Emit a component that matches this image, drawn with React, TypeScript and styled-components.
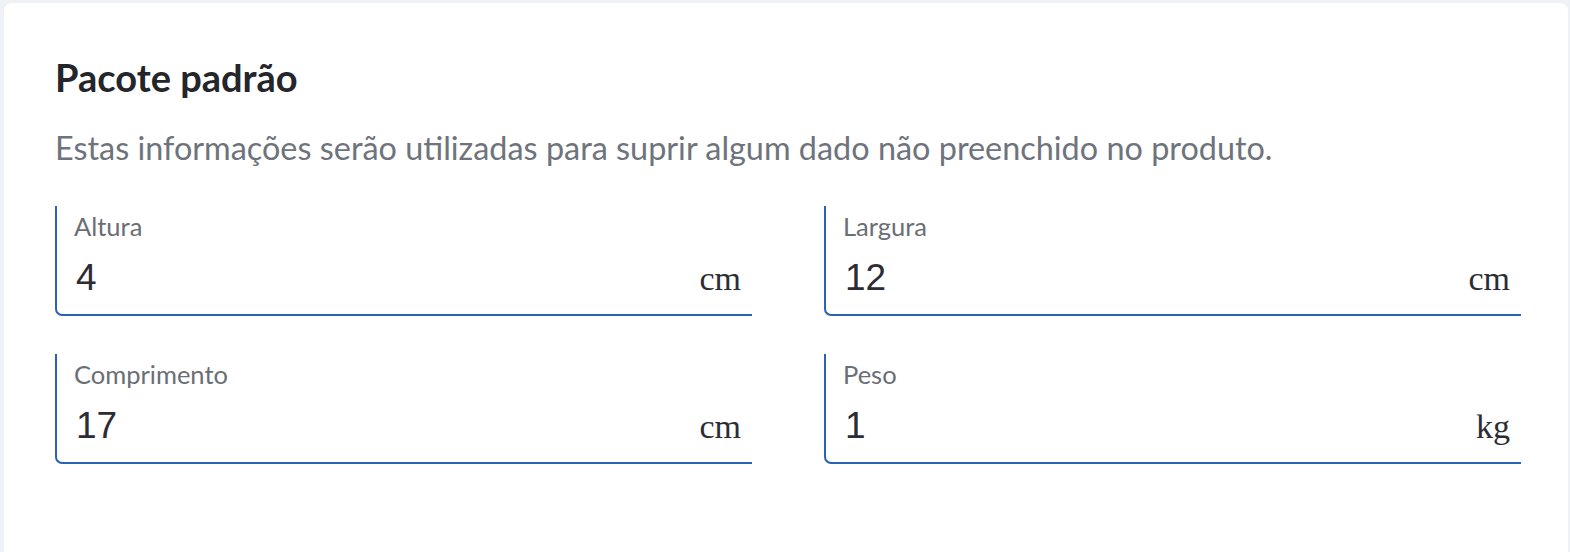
import React from "react";
import styled, { createGlobalStyle } from "styled-components";

const Global = createGlobalStyle`
  html, body { margin: 0; padding: 0; background: #eef1f5; }
  body { font-family: Lato, "Noto Sans", sans-serif; }
`;

const Page = styled.div`
  padding: 3px 0 0 4px;
  height: 549px;
  overflow: hidden;
`;

const Card = styled.section`
  background: #ffffff;
  border-radius: 8px;
  width: 1564px;
  height: 600px;
  box-sizing: border-box;
  padding: 52px 46px 0 51px;
`;

const Title = styled.h2`
  margin: 0;
  font-family: Lato, sans-serif;
  font-weight: 700;
  font-size: 38px;
  line-height: 44px;
  color: #24262b;
`;

const Description = styled.p`
  margin: 29px 0 0;
  font-family: Lato, sans-serif;
  font-weight: 400;
  font-size: 32.4px;
  line-height: 40px;
  color: #6e737c;
`;

const Grid = styled.div`
  margin-top: 38px;
  display: grid;
  grid-template-columns: 697px 697px;
  column-gap: 72px;
  row-gap: 38px;
`;

const Field = styled.label`
  display: flex;
  flex-direction: column;
  height: 110px;
  box-sizing: border-box;
  border-left: 2px solid #2a63b1;
  border-bottom: 2px solid #2a63b1;
  border-bottom-left-radius: 7px;
  padding: 5px 11px 0 17px;
`;

const Label = styled.span`
  font-family: Lato, sans-serif;
  font-size: 25.5px;
  line-height: 30px;
  color: #6a6e75;
`;

const Row = styled.div`
  display: flex;
  align-items: baseline;
  justify-content: space-between;
  margin-top: 17px;
`;

const Value = styled.span`
  font-family: "Liberation Sans", Arial, sans-serif;
  font-size: 37px;
  line-height: 40px;
  color: #2b2d33;
  padding-left: 2px;
`;

const Unit = styled.span`
  font-family: "Liberation Serif", "Times New Roman", serif;
  font-size: 34px;
  line-height: 40px;
  color: #2b2d33;
`;

const fields = [
  { label: "Altura", value: "4", unit: "cm" },
  { label: "Largura", value: "12", unit: "cm" },
  { label: "Comprimento", value: "17", unit: "cm" },
  { label: "Peso", value: "1", unit: "kg" },
];

export default function App() {
  return (
    <>
      <Global />
      <Page>
        <Card>
          <Title>Pacote padrão</Title>
          <Description>
            Estas informações serão utilizadas para suprir algum dado não preenchido no produto.
          </Description>
          <Grid>
            {fields.map((f) => (
              <Field key={f.label}>
                <Label>{f.label}</Label>
                <Row>
                  <Value>{f.value}</Value>
                  <Unit>{f.unit}</Unit>
                </Row>
              </Field>
            ))}
          </Grid>
        </Card>
      </Page>
    </>
  );
}
